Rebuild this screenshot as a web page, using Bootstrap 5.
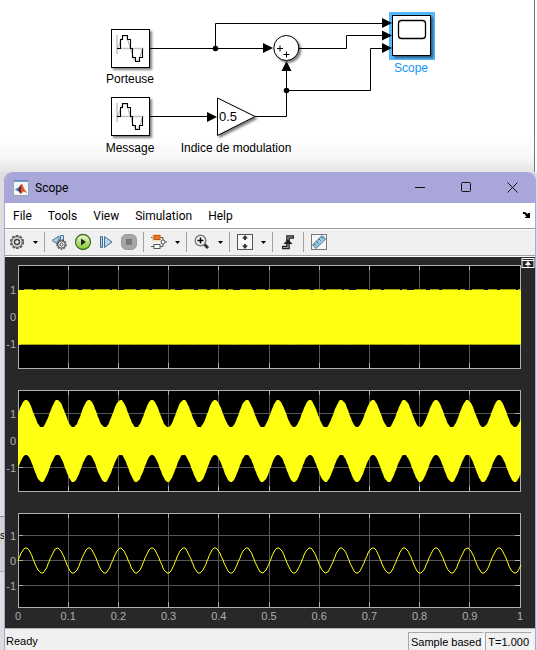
<!DOCTYPE html>
<html lang="en">
<head>
<meta charset="utf-8">
<meta name="viewport" content="width=device-width, initial-scale=1">
<title>Scope</title>
<link href="https://cdn.jsdelivr.net/npm/bootstrap@5.3.0/dist/css/bootstrap.min.css" rel="stylesheet">
<style>
  body { background: #fff; font-family: "Liberation Sans", Arial, sans-serif; color: #000; }
  .model { height: 172px; border-right: 1px solid #77778c; margin-right: 2px; background: linear-gradient(#fff 138px, #f7f7f7 158px, #e4e4e4 172px); }
  .model text { font-size: 12px; }
  .model .gain { font-size: 13px; }
  .desk { background: #dedede; padding: 0 1px 0 4px; }
  .side-note { left: 0; top: 516px; height: 56px; font-size: 10px; line-height: 38px; border-top: 1px solid #8c8c8c; border-bottom: 1px solid #b0b0b0; background: #d2d2d2; }
  .scope-win { border: 1px solid #a9a6d9; border-top: 0; border-bottom: 0; border-radius: 8px 8px 0 0; background: #f0f0f0; }
  .title-bar { height: 31px; background: #a9a6d9; padding-left: 8px; gap: 6px; border-radius: 8px 8px 0 0; }
  .ui-text { font-family: Roboto, "Open Sans", sans-serif; font-size: 12px; line-height: 16px; }
  .win-btn { width: 46px; height: 31px; }
  .flat { border: 0; background: transparent; padding: 0; color: #000; display: flex; align-items: center; justify-content: center; }
  .menu-bar { height: 26px; background: #fff; border-bottom: 1px solid #9a9a9a; padding: 0 4px 0 8px; gap: 16px; }
  .menu-bar a { color: #000; text-decoration: none; }
  .tool-bar { height: 28px; padding-bottom: 2px; border-top: 1px solid #fff; border-bottom: 1px solid #fff; box-shadow: inset 0 -1px #a0a0a0; }
  .tool { width: 24px; height: 24px; }
  .tool-sm { width: 23px; height: 24px; }
  .caret { width: 12px; height: 24px; }
  .sep { width: 1px; height: 20px; margin: 0 3px; background: #a0a0a0; }
  .plots { background: #282828; }
  .plots text { font-size: 11px; fill: #afafaf; }
  .undock { right: 0; top: 0; }
  .status { height: 22px; border-top: 1px solid #b4b4b4; font-size: 11px; line-height: 18px; padding: 3px 3px 0 1px; gap: 1px; }
  .cell { border: 1px solid #a8a8a8; border-right-color: #fff; border-bottom: 0; padding: 0 2px; }
</style>
</head>
<body>
<section class="model overflow-hidden" aria-label="Model">
<svg class="d-block" width="534" height="172" fill="none" stroke="#000">
  <defs>
    <filter id="sh" x="-20%" y="-20%" width="150%" height="150%"><feDropShadow dx="2" dy="2" stdDeviation="1.3" flood-opacity=".5"/></filter>
    <g id="source">
      <rect x=".5" y=".5" width="38" height="38" fill="#fff" filter="url(#sh)"/>
      <path d="M6 6v19M6 19.500h26" stroke="#c4c4c4" stroke-width="1.500"/>
      <path d="M6 19.500C9 16 10 7 13.500 7S17 14 19.500 19.500 22 32 25.500 32 30 23 32 19.500" stroke="#aaa"/>
      <path d="M6 19.500h3.500v-9h2v-4h5v4h3v9h2v9h3v4h4v-4h3v-9" stroke-width="1.100"/>
    </g>
    <path id="arrow" d="M0 0l-10-5v10z" fill="#000" stroke="none"/>
  </defs>
  <path d="M149 48.500h118M215.500 48.500v-25H385M299 48.500h47.500v-13H385M149 116.500h62M255 116.500h31.500V66M286.500 90.500h84v-42H385"/>
  <use href="#arrow" x="273" y="48"/><use href="#arrow" x="217" y="117"/>
  <use href="#arrow" transform="translate(286.500 61) rotate(-90)"/>
  <circle cx="215.500" cy="48.500" r="2.800" fill="#000" stroke="none"/><circle cx="286.500" cy="90.500" r="2.800" fill="#000" stroke="none"/>
  <use href="#source" x="111" y="29"/><use href="#source" x="111" y="97"/>
  <path d="M217.500 98v37.500L255 116.500z" fill="#fff" filter="url(#sh)"/>
  <circle cx="286.300" cy="48" r="12.500" fill="#fff" filter="url(#sh)"/>
  <path d="M277 48.500h6M280 45.500v6M283.500 54.500h6M286.500 51.500v6"/>
  <rect x="389" y="12" width="46" height="48" fill="#55b7fb" stroke="none"/>
  <rect x="392.500" y="15.500" width="38" height="40" fill="#fff" filter="url(#sh)"/>
  <rect x="398.500" y="20.500" width="27" height="18" rx="3" stroke-width="1.300"/>
  <use href="#arrow" x="392" y="23"/><use href="#arrow" x="392" y="35.500"/><use href="#arrow" x="392" y="48"/>
  <g fill="#000" stroke="none" text-anchor="middle">
    <text x="130" y="83">Porteuse</text><text x="130" y="152">Message</text>
    <text x="236" y="152">Indice de modulation</text><text x="228" y="121" class="gain">0.5</text>
    <text x="411" y="72" fill="#1493f4">Scope</text>
  </g>
</svg>
</section>
<div class="side-note position-absolute">s</div>
<main class="desk">
<div class="scope-win position-relative">
  <header class="title-bar d-flex align-items-center">
    <svg width="16" height="16"><defs><linearGradient id="peak" x2="1"><stop stop-color="#26a"/><stop offset=".42" stop-color="#612"/><stop offset=".58" stop-color="#e62"/><stop offset="1" stop-color="#a21"/></linearGradient></defs>
      <rect x=".5" y=".5" width="15" height="15" fill="#f3f6f8" stroke="#9aa6b4"/><path d="M1 1h14" stroke="#4b82b8" stroke-width="1.500"/>
      <path d="M2 9.500l3-1.500c2-1 2.500-4 3.500-4s2 3 2.500 4.500l3 4.500c-2-1-3-2-4-1s-1.500 2-2.500 1.500S6 11 5 11z" fill="url(#peak)"/><path d="M2 9.500L5 8l2-1.500L5 11z" fill="#3a86c4"/></svg>
    <span class="ui-text">Scope</span>
    <div class="d-flex ms-auto">
      <button class="flat win-btn" aria-label="Minimize"><svg width="11" height="11" stroke="#111"><path d="M0 5.500h10"/></svg></button>
      <button class="flat win-btn" aria-label="Maximize"><svg width="11" height="11" stroke="#111" fill="none"><rect x=".5" y=".5" width="9" height="9" rx="1"/></svg></button>
      <button class="flat win-btn" aria-label="Close"><svg width="11" height="11" stroke="#111"><path d="M.5.5l10 10M10.500.5l-10 10"/></svg></button>
    </div>
  </header>
  <nav class="menu-bar d-flex align-items-center ui-text">
    <a href="#">File</a><a href="#">Tools</a><a href="#">View</a><a href="#">Simulation</a><a href="#">Help</a>
    <button class="flat ms-auto" aria-label="Dock"><svg width="8" height="7"><path d="M0 0h2l3 2V1h2v5H2V5h1.500L1.500 2H0z"/></svg></button>
  </nav>
  <div class="tool-bar d-flex align-items-center" role="toolbar">
    <button class="flat tool" aria-label="Configuration"><svg width="16" height="16" fill="none"><circle cx="8" cy="8" r="6.300" stroke="#555" stroke-width="1.600" stroke-dasharray="2.600 1.350"/><circle cx="8" cy="8" r="5.300" fill="#e4e4e4" stroke="#555"/><circle cx="8" cy="8" r="2.500" fill="#eee" stroke="#444" stroke-width="1.400"/></svg></button>
    <button class="flat caret" aria-label="Configuration menu"><svg width="5" height="3"><path d="M0 0h5L2.500 3z"/></svg></button>
    <span class="sep"></span>
    <button class="flat tool-sm" aria-label="Step back options"><svg width="17" height="16" fill="none"><path d="M8 2L1 6.500 8 11z" fill="#a9c9df" stroke="#4b789b"/><path d="M9.500 1.500h3v6h-3z" fill="#cfe2ef" stroke="#4b789b"/><circle cx="10.500" cy="10.500" r="4.500" stroke="#555" stroke-width="1.500" stroke-dasharray="2 1"/><circle cx="10.500" cy="10.500" r="3.600" fill="#eee" stroke="#555"/><circle cx="10.500" cy="10.500" r="1.500" fill="#fff" stroke="#444"/></svg></button>
    <button class="flat tool-sm" aria-label="Run"><svg width="18" height="18"><defs><linearGradient id="go" x2="0" y2="1"><stop stop-color="#f2fbd6"/><stop offset="1" stop-color="#7ecb25"/></linearGradient></defs><circle cx="9" cy="9" r="7.500" fill="url(#go)" stroke="#456e2b" stroke-width="1.300"/><path d="M7 5.500v7L12 9z" fill="#222"/></svg></button>
    <button class="flat tool-sm" aria-label="Step forward"><svg width="14" height="14" fill="#b9d7ea" stroke="#426f96"><path d="M1.500 1.500h2v11h-2zM5.500 1.500v11L13 7z"/></svg></button>
    <button class="flat tool-sm" aria-label="Stop" disabled><svg width="16" height="16"><rect x=".5" y=".5" width="15" height="15" rx="5" fill="#a6a6a6" stroke="#999"/><rect x="5" y="5" width="6" height="6" fill="#777"/></svg></button>
    <span class="sep"></span>
    <button class="flat tool" aria-label="Highlight block"><svg width="17" height="16" fill="#fff" stroke="#555"><path d="M0 3.500h3M9 3.500h3v3M0 12.500h3M9 12.500h3v-3M14 8h2" fill="none"/><rect x="1.500" y=".5" width="8" height="6" fill="#fdc66a" stroke="none"/><rect x="3" y="1.500" width="6" height="4" fill="#e9792d" stroke="#bd5a18"/><rect x="3" y="10.500" width="6" height="4"/><circle cx="12" cy="8" r="2"/></svg></button>
    <button class="flat caret" aria-label="Highlight menu"><svg width="5" height="3"><path d="M0 0h5L2.500 3z"/></svg></button>
    <span class="sep"></span>
    <button class="flat tool" aria-label="Zoom in"><svg width="16" height="16" fill="none"><path d="M10 10l4 4" stroke="#333" stroke-width="3"/><circle cx="6.500" cy="6.500" r="5.300" fill="#edf5f8" stroke="#777" stroke-width="1.400"/><path d="M3.500 6.500h6M6.500 3.500v6" stroke="#000" stroke-width="1.500"/></svg></button>
    <button class="flat caret" aria-label="Zoom menu"><svg width="5" height="3"><path d="M0 0h5L2.500 3z"/></svg></button>
    <span class="sep"></span>
    <button class="flat tool" aria-label="Scale axes"><svg width="16" height="16"><rect x=".5" y=".5" width="15" height="15" fill="#f8f8f8" stroke="#555"/><path d="M8 1l3 3.500H9V6H7V4.500H5zM8 15l3-3.500H9V10H7v1.500H5z" fill="#333"/></svg></button>
    <button class="flat caret" aria-label="Scale menu"><svg width="5" height="3"><path d="M0 0h5L2.500 3z"/></svg></button>
    <span class="sep"></span>
    <button class="flat tool" aria-label="Triggers"><svg width="14" height="16"><path d="M1 13.500h6V3h6" fill="none" stroke="#222" stroke-width="3.600"/><path d="M2 13.500h5V3h5" fill="none" stroke="#999" stroke-width="1.200"/><path d="M7 5l4.500 5h-9z" fill="#222"/></svg></button>
    <span class="sep"></span>
    <button class="flat tool" aria-label="Measurements"><svg width="16" height="16"><rect x=".5" y=".5" width="15" height="15" fill="#f6f6f6" stroke="#777"/><path d="M1.500 11L11 1.500l3.500 3.500L5 14.500z" fill="#9fcbe3" stroke="#3c6f92"/><path d="M5.500 7.500l2 2M8 5l1.500 1.500M10.500 3l1.500 1.500M3.500 10l1.500 1.500" stroke="#2f536c"/></svg></button>
  </div>
  <div class="plots position-relative">
    <svg id="plots" class="d-block w-100" height="371"></svg>
    <button class="flat undock position-absolute" aria-label="Maximize axes"><svg width="14" height="12" fill="none" stroke="#fff"><rect x="1" y="1.500" width="12" height="9" fill="#282828"/><path d="M1 3.500h12M7 10V6"/><path d="M7 4L4 8h6z" fill="#fff" stroke="none"/></svg></button>
  </div>
  <footer class="status d-flex">
    <span class="me-auto">Ready</span><span class="cell">Sample based</span><span class="cell">T=1.000</span>
  </footer>
</div>
</main>
<script src="https://cdn.jsdelivr.net/npm/bootstrap@5.3.0/dist/js/bootstrap.bundle.min.js"></script>
<script>
const svg = document.getElementById('plots');
const plots = [
  { top: 8, bottom: 111, zero: 60, unit: 27, kind: 'carrier' },
  { top: 133, bottom: 234, zero: 183, unit: 27.4, kind: 'sum' },
  { top: 256, bottom: 350, zero: 303, unit: 25, kind: 'message' }
];
function draw() {
  const left = 13, right = svg.clientWidth - 15, w = right - left;
  const msg = x => 0.5 * Math.sin(100 * (x - left) / w);
  const line = (d, c) => `<path d="${d}" stroke="${c}" fill="none" shape-rendering="crispEdges"/>`;
  const curve = f => { const p = []; for (let x = left; x <= right + 1; x++) p.push(x + ' ' + Math.round(f(x))); return p; };
  let out = '';
  for (const p of plots) {
    const y = v => p.zero - v * p.unit;
    out += `<rect x="${left}" y="${p.top}" width="${w}" height="${p.bottom - p.top}"/>`;
    let grid = '', ticks = '';
    for (let i = 1; i < 10; i++) {
      const x = Math.floor(left + w * i / 10) + 0.5;
      grid += `M${x} ${p.top}V${p.bottom}`;
      ticks += `M${x} ${p.top}v5M${x} ${p.bottom}v-5`;
    }
    for (const v of [-1, 0, 1]) {
      const g = Math.round(y(v)) + 0.5;
      grid += `M${left} ${g}H${right}`;
      ticks += `M${left} ${g}h5M${right} ${g}h-5`;
    }
    out += line(grid, '#575757') + line(ticks, '#afafaf');
    out += `<rect x="${left + 0.5}" y="${p.top + 0.5}" width="${w}" height="${p.bottom - p.top}" fill="none" stroke="#afafaf"/>`;
    if (p.kind === 'carrier') {
      out += `<path d="M${left} ${y(1)}H${right + 1}V${y(-1) + 0.5}H${left}z" fill="#ffff11"/>`;
      out += `<path d="M${left + 6} ${y(1) - 0.5}H${right}M${left + 3} ${y(-1) + 0.5}H${right}" stroke="#a3a30b" stroke-dasharray="9 3 16 2 5 7 12 4"/>`;
    }
    if (p.kind === 'sum') {
      const up = curve(x => y(1 + msg(x)) + 1), low = curve(x => y(-1 + msg(x)) + 1).reverse();
      out += `<path d="M${up.concat(low).join('L')}z" fill="#ffff11"/>`;
    }
    if (p.kind === 'message') out += `<path d="M${curve(x => y(msg(x)) + 0.5).join('L')}" fill="none" stroke="#ffff11"/>`;
    const drop = p.kind === 'carrier' ? 4 : 5;
    for (const v of [-1, 0, 1]) out += `<text x="11" y="${Math.round(y(v)) + drop}" text-anchor="end">${v}</text>`;
  }
  for (let i = 0; i <= 10; i++) out += `<text x="${left + w * i / 10}" y="363" text-anchor="middle">${i / 10}</text>`;
  svg.innerHTML = out;
}
draw();
addEventListener('resize', draw);
</script>
</body>
</html>
